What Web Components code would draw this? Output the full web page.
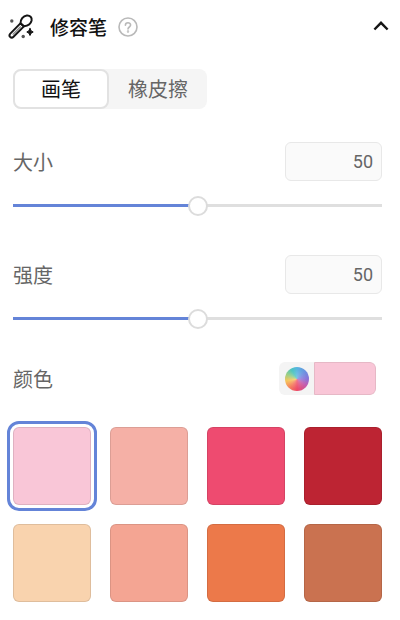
<!DOCTYPE html>
<html lang="zh-CN">
<head>
<meta charset="utf-8">
<meta name="viewport" content="width=device-width, initial-scale=1">
<title>修容笔</title>
<style>
  body { margin: 0; background: #fff; color: #666; font: 20px/24px "Noto Sans CJK SC", sans-serif; }
  value-slider + value-slider { margin-top: 7px; }
</style>
</head>
<body>
<contour-panel>
  <panel-header slot="header">修容笔</panel-header>
  <mode-tabs></mode-tabs>
  <value-slider label="大小" value="50"></value-slider>
  <value-slider label="强度" value="50"></value-slider>
  <color-field label="颜色" color="#f9c6d7"></color-field>
  <swatch-grid></swatch-grid>
</contour-panel>

<script>
const attach = (el, html) => {
  const t = document.createElement('template');
  t.innerHTML = '<style>*{box-sizing:border-box}button,input{font:inherit;color:inherit;margin:0}button{cursor:pointer}</style>' + html;
  const root = el.attachShadow({ mode: 'open' });
  root.append(t.content.cloneNode(true));
  return root;
};

customElements.define('contour-panel', class extends HTMLElement {
  constructor() {
    super();
    attach(this, `<style>
      :host { display: block; }
      section { display: flex; flex-direction: column; padding: 16px 18px 18px 13px; }
    </style>
    <slot name="header"></slot><section><slot></slot></section>`);
  }
});

customElements.define('panel-header', class extends HTMLElement {
  constructor() {
    super();
    attach(this, `<style>
      :host { display: block; color: #111; }
      header { display: flex; align-items: center; height: 53px; padding: 0 10px 0 8px; }
      h2 { font-size: 19px; line-height: 24px; font-weight: 500; margin: 0 11px 0 16px; }
      button { display: flex; padding: 0; border: 0; background: none; }
      .fold { margin-left: auto; }
      svg { display: block; }
    </style>
    <header>
      <svg width="26" height="26" viewBox="0 0 26 26" fill="none" stroke="#151515" stroke-width="2" stroke-linejoin="round" stroke-linecap="round" aria-hidden="true">
        <path d="M12.600 9.200C12.400 5.500 15 2 18.800 1.600C22 1.300 24.200 3.500 23.600 6.500C22.900 9.600 19.800 11.800 16 12.200Z"/>
        <path d="M12.400 9.400L2.300 19.600C1.300 20.700 1.300 22 2.200 22.900C3.200 23.800 4.500 23.700 5.500 22.700L15.900 12.400Z"/>
        <path d="M5 20.200L12.500 12.800" stroke="#888" stroke-width="1.200"/>
        <path d="M22 14.500Q22.600 17.400 25.200 18Q22.600 18.600 22 21.500Q21.400 18.600 18.800 18Q21.400 17.400 22 14.500Z" fill="#151515" stroke-width="1"/>
        <circle cx="3.800" cy="7" r="1.700" fill="#555" stroke="none"/>
        <circle cx="15.200" cy="22.500" r="1.700" fill="#555" stroke="none"/>
      </svg>
      <h2><slot></slot></h2>
      <button aria-label="帮助"><svg width="20" height="20" viewBox="0 0 20 20" fill="none" stroke="#b9b9b9" stroke-width="1.6" stroke-linecap="round">
        <circle cx="10" cy="10" r="9"/><path d="M7.400 8.200C7.400 4.900 12.600 4.900 12.600 8.100C12.600 10 10 10 10 12"/><circle cx="10" cy="14.500" r=".4"/></svg></button>
      <button class="fold" aria-label="收起"><svg width="18" height="18" viewBox="0 0 18 18" fill="none" stroke="#151515" stroke-width="2.4"><path d="M2.400 11.500L9 4.800L15.600 11.500"/></svg></button>
    </header>`);
  }
});

customElements.define('mode-tabs', class extends HTMLElement {
  constructor() {
    super();
    const root = attach(this, `<style>
      :host { display: flex; }
      div { display: flex; border-radius: 8px; background: #f5f5f5; }
      button { height: 40px; padding: 0 17px; border: 2px solid transparent; border-radius: 8px; background: none; color: #666; }
      button[aria-selected=true] { padding: 0 26px; border-color: #e2e2e2; background: #fff; color: #111; }
    </style>
    <div role="tablist"><button role="tab" aria-selected="true">画笔</button><button role="tab" aria-selected="false">橡皮擦</button></div>`);
    const tabs = root.querySelectorAll('button');
    tabs.forEach(b => b.onclick = () => tabs.forEach(t => t.setAttribute('aria-selected', t === b)));
  }
});

customElements.define('value-slider', class extends HTMLElement {
  constructor() {
    super();
    const label = this.getAttribute('label'), value = this.getAttribute('value');
    const root = attach(this, `<style>
      :host { display: block; padding-top: 33px; }
      .row { display: flex; align-items: center; justify-content: space-between; }
      .num { width: 97px; height: 39px; padding: 0 8px; border: 1px solid #e8e8e8; border-radius: 6px; background: #fafafa; font: 18px/24px Roboto, sans-serif; text-align: right; }
      .range { display: block; width: 100%; height: 20px; margin-top: 14px; appearance: none; background: none; --pos: ${value}%; }
      .range::-webkit-slider-runnable-track { height: 3px; background: linear-gradient(90deg, #6484d8 var(--pos), #dfdfdf var(--pos)); }
      .range::-webkit-slider-thumb { appearance: none; box-sizing: border-box; width: 20px; height: 20px; margin-top: -8px; border: 2px solid #dcdcdc; border-radius: 50%; background: #fff; }
    </style>
    <div class="row"><label for="n">${label}</label><input class="num" id="n" inputmode="numeric" value="${value}"></div>
    <input class="range" type="range" min="0" max="100" value="${value}" aria-label="${label}">`);
    const num = root.querySelector('.num'), range = root.querySelector('.range');
    const paint = () => range.style.setProperty('--pos', range.value + '%');
    range.oninput = () => { num.value = range.value; paint(); };
    num.onchange = () => { range.value = num.value; num.value = range.value; paint(); };
  }
});

customElements.define('color-field', class extends HTMLElement {
  constructor() {
    super();
    attach(this, `<style>
      :host { display: flex; align-items: center; justify-content: space-between; padding: 34px 6px 0 0; }
      button { display: flex; height: 33px; padding: 0; border: 0; border-radius: 6px; background: #f4f4f4; overflow: hidden; }
      .pick { display: flex; align-items: center; justify-content: center; width: 35px; height: 33px; }
      i { width: 24px; height: 24px; border-radius: 50%; background: radial-gradient(circle, #ffffff40, transparent 60%), conic-gradient(#58b5e0, #6d8fe0 50deg, #8b72d8 90deg, #c45cae 125deg, #ee4a66 180deg, #f5805f 220deg, #f6c65c 260deg, #9bcf86 295deg, #4cc5c0 330deg, #58b5e0); }
      .chip { width: 62px; height: 33px; border: 1px solid #e6b8c6; border-radius: 0 6px 6px 0; background: ${this.getAttribute('color')}; }
    </style>
    <span>${this.getAttribute('label')}</span>
    <button aria-label="选择颜色"><span class="pick"><i></i></span><span class="chip"></span></button>`);
  }
});

customElements.define('swatch-grid', class extends HTMLElement {
  constructor() {
    super();
    const colors = ['#f9c6d7', '#f5b0a6', '#ee4b70', '#bd2433', '#f9d3ae', '#f4a593', '#ec794a', '#ca7250'];
    const root = attach(this, `<style>
      :host { display: grid; grid-template-columns: repeat(4, 1fr); gap: 19px; padding-top: 32px; }
      button { aspect-ratio: 1; padding: 0; border: 1px solid #0000001a; border-radius: 6px; }
      button[aria-pressed=true] { outline: 3px solid #6484d8; outline-offset: 3px; }
    </style>` + colors.map((c, i) => `<button style="background:${c}" aria-label="${c}" aria-pressed="${i === 0}"></button>`).join(''));
    const all = root.querySelectorAll('button');
    all.forEach(b => b.onclick = () => all.forEach(o => o.setAttribute('aria-pressed', o === b)));
  }
});
</script>
</body>
</html>
